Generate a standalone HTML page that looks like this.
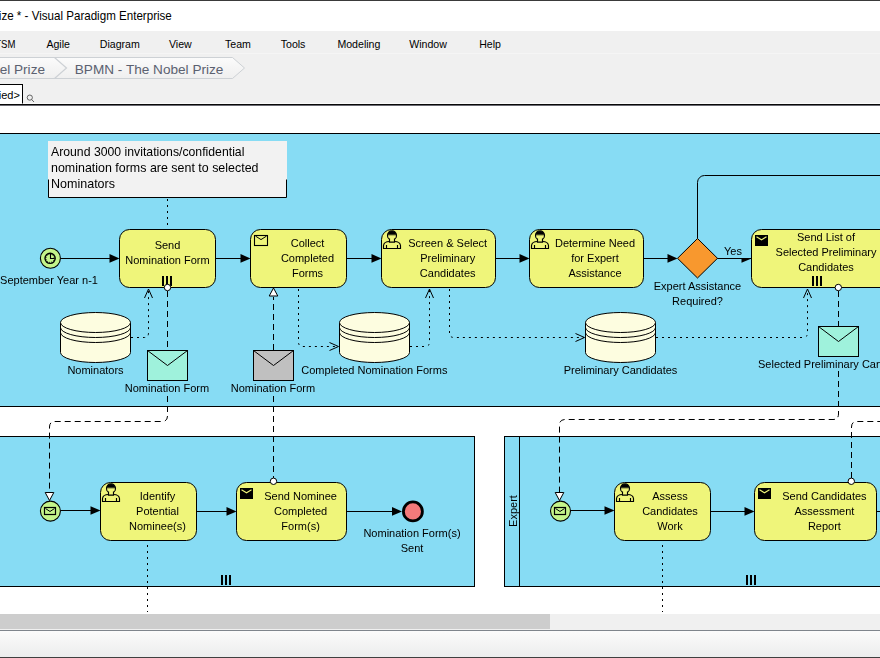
<!DOCTYPE html>
<html><head><meta charset="utf-8"><style>
html,body{margin:0;padding:0;background:#fff;overflow:hidden;}
svg{display:block;font-family:"Liberation Sans", sans-serif;position:absolute;left:0;top:0;}
.d{will-change:transform;}
</style></head><body>
<svg width="880" height="658" viewBox="0 0 880 658">
<defs>
<linearGradient id="bc" x1="0" y1="0" x2="0" y2="1"><stop offset="0" stop-color="#fbfbfb"/><stop offset="1" stop-color="#efefef"/></linearGradient>
<linearGradient id="st" x1="0" y1="0" x2="0" y2="1"><stop offset="0" stop-color="#fbfbfb"/><stop offset="1" stop-color="#eceded"/></linearGradient>
</defs>

<rect x="0" y="0" width="880" height="31" fill="#fff"/>
<rect x="0" y="0" width="880" height="1" fill="#3a3a3a"/>
<text x="-1.2" y="20" font-size="12.4" text-anchor="start" fill="#000" textLength="173" lengthAdjust="spacingAndGlyphs">ize * - Visual Paradigm Enterprise</text>
<rect x="0" y="31" width="880" height="73" fill="#f0f0f0"/>
<rect x="0" y="53" width="880" height="1" fill="#f5f5f5"/>
<text x="-4.8" y="47.8" font-size="10.6" text-anchor="start" fill="#000" textLength="20.2" lengthAdjust="spacingAndGlyphs">TSM</text>
<text x="46.4" y="47.8" font-size="10.6" text-anchor="start" fill="#000" >Agile</text>
<text x="99.75" y="47.8" font-size="10.6" text-anchor="start" fill="#000" >Diagram</text>
<text x="169" y="47.8" font-size="10.6" text-anchor="start" fill="#000" >View</text>
<text x="225" y="47.8" font-size="10.6" text-anchor="start" fill="#000" >Team</text>
<text x="280.7" y="47.8" font-size="10.6" text-anchor="start" fill="#000" >Tools</text>
<text x="337.4" y="47.8" font-size="10.6" text-anchor="start" fill="#000" >Modeling</text>
<text x="409.2" y="47.8" font-size="10.6" text-anchor="start" fill="#000" >Window</text>
<text x="479.2" y="47.8" font-size="10.6" text-anchor="start" fill="#000" >Help</text>
<path d="M-2,57.5 L232.5,57.5 L244.5,68 L232.5,78.5 L-2,78.5 Z" fill="url(#bc)" stroke="#cdd1d5" stroke-width="1"/>
<path d="M54.5,57.5 L66.5,68 L54.5,78.5" fill="none" stroke="#cdd1d5" stroke-width="1.2"/>
<text x="45" y="73.5" font-size="13.6" text-anchor="end" fill="#5b6170" >el Prize</text>
<text x="74.8" y="73.5" font-size="13.6" text-anchor="start" fill="#5b6170" >BPMN - The Nobel Prize</text>
<rect x="-2" y="84.5" width="24.5" height="20" fill="#fff" stroke="#000" stroke-width="1"/>
<text x="19.8" y="98.5" font-size="11" text-anchor="end" fill="#000" >ied&gt;</text>
<circle cx="29.8" cy="97.6" r="2.6" fill="none" stroke="#555" stroke-width="0.9"/><path d="M31.6,99.5 L34,102" stroke="#555" stroke-width="0.9"/>
<rect x="22.5" y="103" width="858" height="1" fill="#fafafa"/>
<rect x="0" y="104" width="880" height="1" fill="#080808"/>
<rect x="0" y="105" width="880" height="1" fill="#6a6a72"/>
<rect x="0" y="614" width="880" height="15" fill="#f0f0f0"/>
<rect x="0" y="614" width="550" height="15" fill="#cdcdcd"/>
<rect x="0" y="629" width="880" height="1" fill="#f0f0f0"/>
<rect x="0" y="630" width="880" height="1" fill="#7f858c"/>
<rect x="0" y="631" width="880" height="26" fill="url(#st)"/>
<rect x="0" y="657" width="880" height="1" fill="#404040"/>
</svg>
<svg class="d" width="880" height="658" viewBox="0 0 880 658">
<rect x="-2" y="133.5" width="884" height="273" fill="#87dcf4" stroke="#000" stroke-width="1"/>
<rect x="-2" y="436.5" width="476.5" height="150" fill="#87dcf4" stroke="#000" stroke-width="1"/>
<rect x="504.5" y="436.5" width="380" height="150" fill="#87dcf4" stroke="#000" stroke-width="1"/>
<path d="M519.5,436.5 L519.5,586.5" stroke="#000" stroke-width="1"/>
<text x="0" y="0" font-size="11" text-anchor="middle" fill="#000" transform="translate(516.5,511) rotate(-90)">Expert</text>
<rect x="48" y="141" width="239" height="56.5" fill="#f2f2f2"/>
<path d="M48.5,179.5 L48.5,197.5 L286.5,197.5 L286.5,179.5" fill="none" stroke="#000" stroke-width="1" />
<text x="51" y="156.0" font-size="12.2" text-anchor="start" fill="#000" textLength="193.4" lengthAdjust="spacingAndGlyphs">Around 3000 invitations/confidential</text>
<text x="51" y="171.8" font-size="12.2" text-anchor="start" fill="#000" textLength="207.5" lengthAdjust="spacingAndGlyphs">nomination forms are sent to selected</text>
<text x="51" y="187.6" font-size="12.2" text-anchor="start" fill="#000" textLength="64" lengthAdjust="spacingAndGlyphs">Nominators</text>
<path d="M167.5,199 L167.5,229" fill="none" stroke="#000" stroke-width="1" stroke-dasharray="2,4"/>
<circle cx="50.4" cy="258.3" r="10" fill="#c4f48a" stroke="#000" stroke-width="1.1"/>
<circle cx="50.1" cy="258.3" r="5.1" fill="none" stroke="#000" stroke-width="1.4"/>
<circle cx="50.1" cy="258.3" r="4.1" fill="none" stroke="#000" stroke-width="1" stroke-dasharray="0.8,1.35"/>
<path d="M50.5,253.8 L50.5,258.5 L54.5,258.5" fill="none" stroke="#000" stroke-width="1.1"/>
<text x="49" y="284" font-size="11" text-anchor="middle" fill="#000" >September Year n-1</text>
<path d="M60.5,258.5 L110,258.5" fill="none" stroke="#000" stroke-width="1" />
<path d="M109.5,254.09999999999997 L119.5,258.4 L109.5,262.7 Z" fill="#000"/>
<rect x="119.5" y="229.5" width="96.0" height="58.0" rx="10" ry="10" fill="#eff57a" stroke="#000" stroke-width="1"/>
<text x="167.5" y="249" font-size="11" text-anchor="middle" fill="#000" >Send</text>
<text x="167.5" y="264" font-size="11" text-anchor="middle" fill="#000" >Nomination Form</text>
<rect x="162" y="276" width="2" height="10" fill="#000"/>
<rect x="166" y="276" width="2" height="10" fill="#000"/>
<rect x="170" y="276" width="2" height="10" fill="#000"/>
<path d="M215.5,258.5 L241,258.5" fill="none" stroke="#000" stroke-width="1" />
<path d="M240.5,254.09999999999997 L250.5,258.4 L240.5,262.7 Z" fill="#000"/>
<rect x="250.5" y="229.5" width="96.0" height="58.0" rx="10" ry="10" fill="#eff57a" stroke="#000" stroke-width="1"/>
<text x="307.5" y="247" font-size="11" text-anchor="middle" fill="#000" >Collect</text>
<text x="307.5" y="262" font-size="11" text-anchor="middle" fill="#000" >Completed</text>
<text x="307.5" y="277" font-size="11" text-anchor="middle" fill="#000" >Forms</text>
<rect x="254.5" y="235.5" width="13" height="10" fill="none" stroke="#000" stroke-width="1.1"/>
<path d="M255.5,236.1 L261.0,239.6 L266.5,236.1" fill="none" stroke="#000" stroke-width="1"/>
<path d="M346.5,258.5 L372,258.5" fill="none" stroke="#000" stroke-width="1" />
<path d="M371.5,254.09999999999997 L381.5,258.4 L371.5,262.7 Z" fill="#000"/>
<rect x="381.5" y="229.5" width="114.0" height="58.0" rx="10" ry="10" fill="#eff57a" stroke="#000" stroke-width="1"/>
<text x="447.7" y="247" font-size="11" text-anchor="middle" fill="#000" >Screen &amp; Select</text>
<text x="447.7" y="262" font-size="11" text-anchor="middle" fill="#000" >Preliminary</text>
<text x="447.7" y="276.5" font-size="11" text-anchor="middle" fill="#000" >Candidates</text>
<g fill="#eff57a" stroke="#000" stroke-width="1.15"><path d="M383.5,248.5 L383.5,245.5 Q384.0,241.5 389.5,241.5 L394.5,241.5 Q400.0,241.5 400.5,245.5 L400.5,248.5 Z"/><circle cx="392.0" cy="235.4" r="4.5"/><path d="M389.5,238.5 L389.5,242.1 L394.5,242.1 L394.5,238.5"/><path d="M386.5,245.0 L386.5,248.5 M397.5,245.0 L397.5,248.5" fill="none"/></g>
<path d="M387.5,235.4 A4.5,4.5 0 0 1 396.5,235.4 L396.3,234.4 L387.7,234.4 Z M387.5,235.20000000000002 L396.5,235.20000000000002 L396.5,234.3 L387.5,234.3Z" fill="#000"/>
<path d="M495.5,258.5 L520,258.5" fill="none" stroke="#000" stroke-width="1" />
<path d="M519.5,254.09999999999997 L529.5,258.4 L519.5,262.7 Z" fill="#000"/>
<rect x="529.5" y="229.5" width="114.0" height="58.0" rx="10" ry="10" fill="#eff57a" stroke="#000" stroke-width="1"/>
<text x="595" y="247" font-size="11" text-anchor="middle" fill="#000" >Determine Need</text>
<text x="595" y="262" font-size="11" text-anchor="middle" fill="#000" >for Expert</text>
<text x="595" y="276.5" font-size="11" text-anchor="middle" fill="#000" >Assistance</text>
<g fill="#eff57a" stroke="#000" stroke-width="1.15"><path d="M531.5,248.5 L531.5,245.5 Q532.0,241.5 537.5,241.5 L542.5,241.5 Q548.0,241.5 548.5,245.5 L548.5,248.5 Z"/><circle cx="540.0" cy="235.4" r="4.5"/><path d="M537.5,238.5 L537.5,242.1 L542.5,242.1 L542.5,238.5"/><path d="M534.5,245.0 L534.5,248.5 M545.5,245.0 L545.5,248.5" fill="none"/></g>
<path d="M535.5,235.4 A4.5,4.5 0 0 1 544.5,235.4 L544.3,234.4 L535.7,234.4 Z M535.5,235.20000000000002 L544.5,235.20000000000002 L544.5,234.3 L535.5,234.3Z" fill="#000"/>
<path d="M643.5,258.5 L668,258.5" fill="none" stroke="#000" stroke-width="1" />
<path d="M667.5,254.09999999999997 L677.5,258.4 L667.5,262.7 Z" fill="#000"/>
<path d="M697.5,238.5 L717.5,258.3 L697.5,278 L677.5,258.3 Z" fill="#f8982e" stroke="#000" stroke-width="1"/>
<text x="697.5" y="290" font-size="11" text-anchor="middle" fill="#000" >Expert Assistance</text>
<text x="697.5" y="304.5" font-size="11" text-anchor="middle" fill="#000" >Required?</text>
<path d="M717.5,258.5 L742,258.5" fill="none" stroke="#000" stroke-width="1" />
<path d="M741.5,254.09999999999997 L751.5,258.4 L741.5,262.7 Z" fill="#000"/>
<rect x="722" y="244" width="29" height="14" fill="#87dcf4"/>
<path d="M717.5,258.5 L751,258.5" fill="none" stroke="#000" stroke-width="1" />
<text x="733" y="254.5" font-size="11" text-anchor="middle" fill="#000" >Yes</text>
<path d="M697.5,238.5 L697.5,182.5 A7,7 0 0 1 704.5,175.5 L882,175.5" fill="none" stroke="#000" stroke-width="1" />
<rect x="751.5" y="229.5" width="150.0" height="58.0" rx="10" ry="10" fill="#eff57a" stroke="#000" stroke-width="1"/>
<text x="826" y="240.5" font-size="11" text-anchor="middle" fill="#000" >Send List of</text>
<text x="826" y="255.5" font-size="11" text-anchor="middle" fill="#000" >Selected Preliminary</text>
<text x="826" y="270.8" font-size="11" text-anchor="middle" fill="#000" >Candidates</text>
<rect x="755.0" y="235.0" width="13" height="11" fill="#000"/>
<path d="M756.5,236.8 L761.5,239.8 L766.5,236.8" fill="none" stroke="#eff57a" stroke-width="1.1"/>
<rect x="812" y="276" width="2" height="10" fill="#000"/>
<rect x="816" y="276" width="2" height="10" fill="#000"/>
<rect x="820" y="276" width="2" height="10" fill="#000"/>
<path d="M60.5,322.5 L60.5,352.5 A35.0,10 0 0 0 130.5,352.5 L130.5,322.5" fill="#fdfde0" stroke="#000" stroke-width="1"/>
<ellipse cx="95.5" cy="322.5" rx="35.0" ry="10" fill="#fdfde0" stroke="#000" stroke-width="1"/>
<path d="M60.5,327.5 A35.0,10 0 0 0 130.5,327.5" fill="none" stroke="#000" stroke-width="1"/>
<path d="M60.5,332.5 A35.0,10 0 0 0 130.5,332.5" fill="none" stroke="#000" stroke-width="1"/>
<text x="95.5" y="374" font-size="11" text-anchor="middle" fill="#000" >Nominators</text>
<path d="M339.5,322.5 L339.5,352.5 A35.0,10 0 0 0 409.5,352.5 L409.5,322.5" fill="#fdfde0" stroke="#000" stroke-width="1"/>
<ellipse cx="374.5" cy="322.5" rx="35.0" ry="10" fill="#fdfde0" stroke="#000" stroke-width="1"/>
<path d="M339.5,327.5 A35.0,10 0 0 0 409.5,327.5" fill="none" stroke="#000" stroke-width="1"/>
<path d="M339.5,332.5 A35.0,10 0 0 0 409.5,332.5" fill="none" stroke="#000" stroke-width="1"/>
<text x="301.3" y="374" font-size="11" text-anchor="start" fill="#000" >Completed Nomination Forms</text>
<path d="M585.5,322.5 L585.5,352.5 A35.0,10 0 0 0 655.5,352.5 L655.5,322.5" fill="#fdfde0" stroke="#000" stroke-width="1"/>
<ellipse cx="620.5" cy="322.5" rx="35.0" ry="10" fill="#fdfde0" stroke="#000" stroke-width="1"/>
<path d="M585.5,327.5 A35.0,10 0 0 0 655.5,327.5" fill="none" stroke="#000" stroke-width="1"/>
<path d="M585.5,332.5 A35.0,10 0 0 0 655.5,332.5" fill="none" stroke="#000" stroke-width="1"/>
<text x="620.5" y="374" font-size="11" text-anchor="middle" fill="#000" >Preliminary Candidates</text>
<path d="M131,337.5 L144,337.5 Q148.5,337.5 148.5,333 L148.5,290" fill="none" stroke="#000" stroke-width="1" stroke-dasharray="2,4"/>
<path d="M144.5,298 L148.5,289 L152.5,298" fill="none" stroke="#000" stroke-width="1"/>
<path d="M298.5,289 L298.5,342 Q298.5,346.5 303,346.5 L338,346.5" fill="none" stroke="#000" stroke-width="1" stroke-dasharray="2,4"/>
<path d="M329.5,342.5 L338.5,346.5 L329.5,350.5" fill="none" stroke="#000" stroke-width="1"/>
<path d="M410,346.5 L425,346.5 Q429.5,346.5 429.5,342 L429.5,290" fill="none" stroke="#000" stroke-width="1" stroke-dasharray="2,4"/>
<path d="M425.5,298 L429.5,289 L433.5,298" fill="none" stroke="#000" stroke-width="1"/>
<path d="M449.5,289 L449.5,333 Q449.5,337.5 454,337.5 L584,337.5" fill="none" stroke="#000" stroke-width="1" stroke-dasharray="2,4"/>
<path d="M575.5,333.5 L584.5,337.5 L575.5,341.5" fill="none" stroke="#000" stroke-width="1"/>
<path d="M656,337.5 L803,337.5 Q807.5,337.5 807.5,333 L807.5,290" fill="none" stroke="#000" stroke-width="1" stroke-dasharray="2,4"/>
<path d="M803.5,298 L807.5,289 L811.5,298" fill="none" stroke="#000" stroke-width="1"/>
<circle cx="167.5" cy="287.5" r="3.2" fill="#fff" stroke="#000" stroke-width="1"/>
<path d="M167.5,291 L167.5,350" fill="none" stroke="#000" stroke-width="1" stroke-dasharray="6,4"/>
<rect x="147.5" y="350.5" width="40.0" height="30.0" fill="#9ff2dc" stroke="#000" stroke-width="1"/>
<path d="M147.5,350.5 L167.5,365.5 L187.5,350.5" fill="none" stroke="#000" stroke-width="1"/>
<text x="167" y="391.5" font-size="11" text-anchor="middle" fill="#000" >Nomination Form</text>
<path d="M167.5,396 L167.5,416 Q167.5,421.5 162,421.5 L55,421.5 Q49.5,421.5 49.5,427 L49.5,492" fill="none" stroke="#000" stroke-width="1" stroke-dasharray="6,4"/>
<path d="M45.2,492.5 L53.8,492.5 L49.5,500.5 Z" fill="#fff" stroke="#000" stroke-width="1"/>
<rect x="253.5" y="350.5" width="40.0" height="30.0" fill="#c0c0c0" stroke="#000" stroke-width="1"/>
<path d="M253.5,350.5 L273.5,365.5 L293.5,350.5" fill="none" stroke="#000" stroke-width="1"/>
<text x="273" y="391.5" font-size="11" text-anchor="middle" fill="#000" >Nomination Form</text>
<path d="M273.5,350 L273.5,297" fill="none" stroke="#000" stroke-width="1" stroke-dasharray="6,4"/>
<path d="M269.2,296 L277.8,296 L273.5,288 Z" fill="#fff" stroke="#000" stroke-width="1"/>
<circle cx="838.3" cy="287.5" r="3.2" fill="#fff" stroke="#000" stroke-width="1"/>
<path d="M838.5,291 L838.5,326" fill="none" stroke="#000" stroke-width="1" stroke-dasharray="6,4"/>
<rect x="818.5" y="326.5" width="40.0" height="30.0" fill="#9ff2dc" stroke="#000" stroke-width="1"/>
<path d="M818.5,326.5 L838.5,341.5 L858.5,326.5" fill="none" stroke="#000" stroke-width="1"/>
<text x="758" y="367.5" font-size="11" text-anchor="start" fill="#000" >Selected Preliminary Candidates</text>
<path d="M838.5,371 L838.5,414 Q838.5,419.5 833,419.5 L565,419.5 Q559.5,419.5 559.5,425 L559.5,492" fill="none" stroke="#000" stroke-width="1" stroke-dasharray="6,4"/>
<path d="M555.2,492.5 L563.8,492.5 L559.5,500.5 Z" fill="#fff" stroke="#000" stroke-width="1"/>
<circle cx="50.4" cy="511.1" r="10" fill="#c4f48a" stroke="#000" stroke-width="1.1"/>
<rect x="44.5" y="507.5" width="11" height="7" fill="none" stroke="#000" stroke-width="1.2"/><path d="M45.5,508.5 L50,511.5 L54.5,508.5" fill="none" stroke="#000" stroke-width="1"/>
<path d="M60.5,510.5 L91,510.5" fill="none" stroke="#000" stroke-width="1" />
<path d="M90.5,506.2 L100.5,510.5 L90.5,514.8 Z" fill="#000"/>
<rect x="100.5" y="482.5" width="96.0" height="58.0" rx="10" ry="10" fill="#eff57a" stroke="#000" stroke-width="1"/>
<text x="157.5" y="500" font-size="11" text-anchor="middle" fill="#000" >Identify</text>
<text x="157.5" y="515" font-size="11" text-anchor="middle" fill="#000" >Potential</text>
<text x="157.5" y="530" font-size="11" text-anchor="middle" fill="#000" >Nominee(s)</text>
<g fill="#eff57a" stroke="#000" stroke-width="1.15"><path d="M102.5,501.5 L102.5,498.5 Q103.0,494.5 108.5,494.5 L113.5,494.5 Q119.0,494.5 119.5,498.5 L119.5,501.5 Z"/><circle cx="111.0" cy="488.4" r="4.5"/><path d="M108.5,491.5 L108.5,495.1 L113.5,495.1 L113.5,491.5"/><path d="M105.5,498.0 L105.5,501.5 M116.5,498.0 L116.5,501.5" fill="none"/></g>
<path d="M106.5,488.4 A4.5,4.5 0 0 1 115.5,488.4 L115.3,487.4 L106.7,487.4 Z M106.5,488.2 L115.5,488.2 L115.5,487.29999999999995 L106.5,487.29999999999995Z" fill="#000"/>
<path d="M196.5,511.5 L227,511.5" fill="none" stroke="#000" stroke-width="1" />
<path d="M226.5,507.09999999999997 L236.5,511.4 L226.5,515.6999999999999 Z" fill="#000"/>
<rect x="236.5" y="482.5" width="110.0" height="58.0" rx="10" ry="10" fill="#eff57a" stroke="#000" stroke-width="1"/>
<text x="300.6" y="500" font-size="11" text-anchor="middle" fill="#000" >Send Nominee</text>
<text x="300.6" y="515" font-size="11" text-anchor="middle" fill="#000" >Completed</text>
<text x="300.6" y="530" font-size="11" text-anchor="middle" fill="#000" >Form(s)</text>
<rect x="240.0" y="488.0" width="13" height="11" fill="#000"/>
<path d="M241.5,489.8 L246.5,492.8 L251.5,489.8" fill="none" stroke="#eff57a" stroke-width="1.1"/>
<path d="M346.5,511.5 L393,511.5" fill="none" stroke="#000" stroke-width="1" />
<path d="M392,507.09999999999997 L402,511.4 L392,515.6999999999999 Z" fill="#000"/>
<circle cx="412.9" cy="511.4" r="9.5" fill="#f47a7a" stroke="#000" stroke-width="2.8"/>
<text x="412" y="537" font-size="11" text-anchor="middle" fill="#000" >Nomination Form(s)</text>
<text x="412" y="552" font-size="11" text-anchor="middle" fill="#000" >Sent</text>
<rect x="221" y="575" width="2" height="10" fill="#000"/>
<rect x="225" y="575" width="2" height="10" fill="#000"/>
<rect x="229" y="575" width="2" height="10" fill="#000"/>
<path d="M147.5,545 L147.5,612" fill="none" stroke="#000" stroke-width="1" stroke-dasharray="2,4"/>
<circle cx="560.5" cy="511.1" r="10" fill="#c4f48a" stroke="#000" stroke-width="1.1"/>
<rect x="554.5" y="507.5" width="11" height="7" fill="none" stroke="#000" stroke-width="1.2"/><path d="M555.5,508.5 L560,511.5 L564.5,508.5" fill="none" stroke="#000" stroke-width="1"/>
<path d="M570.5,510.5 L605,510.5" fill="none" stroke="#000" stroke-width="1" />
<path d="M604.5,506.2 L614.5,510.5 L604.5,514.8 Z" fill="#000"/>
<rect x="614.5" y="482.5" width="96.0" height="58.0" rx="10" ry="10" fill="#eff57a" stroke="#000" stroke-width="1"/>
<text x="670" y="500" font-size="11" text-anchor="middle" fill="#000" >Assess</text>
<text x="670" y="515" font-size="11" text-anchor="middle" fill="#000" >Candidates</text>
<text x="670" y="530" font-size="11" text-anchor="middle" fill="#000" >Work</text>
<g fill="#eff57a" stroke="#000" stroke-width="1.15"><path d="M616.5,501.5 L616.5,498.5 Q617.0,494.5 622.5,494.5 L627.5,494.5 Q633.0,494.5 633.5,498.5 L633.5,501.5 Z"/><circle cx="625.0" cy="488.4" r="4.5"/><path d="M622.5,491.5 L622.5,495.1 L627.5,495.1 L627.5,491.5"/><path d="M619.5,498.0 L619.5,501.5 M630.5,498.0 L630.5,501.5" fill="none"/></g>
<path d="M620.5,488.4 A4.5,4.5 0 0 1 629.5,488.4 L629.3,487.4 L620.7,487.4 Z M620.5,488.2 L629.5,488.2 L629.5,487.29999999999995 L620.5,487.29999999999995Z" fill="#000"/>
<path d="M710.5,511.5 L745,511.5" fill="none" stroke="#000" stroke-width="1" />
<path d="M744.5,507.09999999999997 L754.5,511.4 L744.5,515.6999999999999 Z" fill="#000"/>
<rect x="754.5" y="482.5" width="122.0" height="58.0" rx="10" ry="10" fill="#eff57a" stroke="#000" stroke-width="1"/>
<text x="824.4" y="500" font-size="11" text-anchor="middle" fill="#000" >Send Candidates</text>
<text x="824.4" y="515" font-size="11" text-anchor="middle" fill="#000" >Assessment</text>
<text x="824.4" y="530" font-size="11" text-anchor="middle" fill="#000" >Report</text>
<rect x="758.0" y="488.0" width="13" height="11" fill="#000"/>
<path d="M759.5,489.8 L764.5,492.8 L769.5,489.8" fill="none" stroke="#eff57a" stroke-width="1.1"/>
<path d="M876.5,511.5 L882,511.5" fill="none" stroke="#000" stroke-width="1" />
<rect x="746" y="575" width="2" height="10" fill="#000"/>
<rect x="750" y="575" width="2" height="10" fill="#000"/>
<rect x="754" y="575" width="2" height="10" fill="#000"/>
<path d="M662.5,545 L662.5,612" fill="none" stroke="#000" stroke-width="1" stroke-dasharray="2,4"/>
<path d="M273.5,396 L273.5,478" fill="none" stroke="#000" stroke-width="1" stroke-dasharray="6,4"/>
<circle cx="273.5" cy="481.3" r="3.2" fill="#fff" stroke="#000" stroke-width="1"/>
<path d="M851.5,478 L851.5,427 Q851.5,421.5 857,421.5 L882,421.5" fill="none" stroke="#000" stroke-width="1" stroke-dasharray="6,4"/>
<circle cx="851.3" cy="481.3" r="3.2" fill="#fff" stroke="#000" stroke-width="1"/>
</svg></body></html>
